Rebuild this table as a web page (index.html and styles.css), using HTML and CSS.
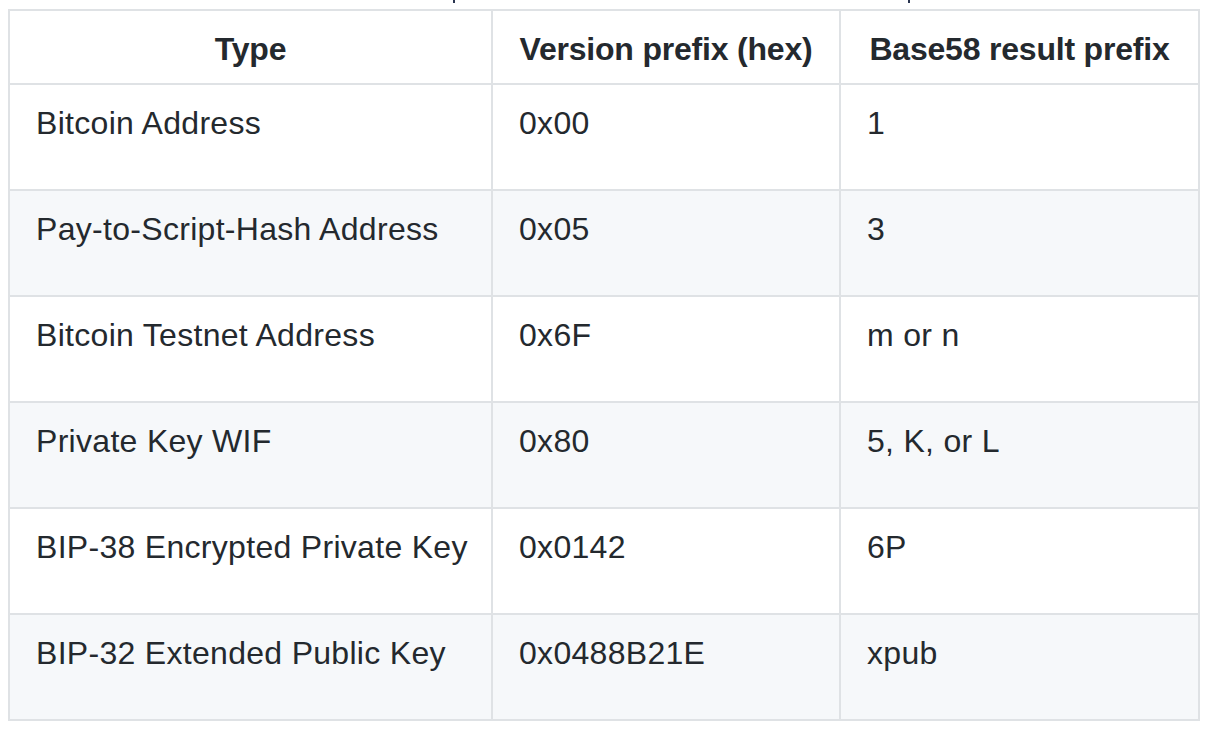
FILE: index.html
```html
<!DOCTYPE html>
<html lang="en">
<head>
<meta charset="utf-8">
<title>Base58Check version prefixes</title>
<link rel="stylesheet" href="styles.css">
</head>
<body>
<div class="page">
  <div class="caption-tail" aria-hidden="true">
    <span class="tail tail-a"></span>
    <span class="tail tail-b"></span>
  </div>
  <table class="prefix-table">
    <colgroup>
      <col class="col-type">
      <col class="col-version">
      <col class="col-result">
    </colgroup>
    <thead>
      <tr>
        <th>Type</th>
        <th>Version prefix (hex)</th>
        <th>Base58 result prefix</th>
      </tr>
    </thead>
    <tbody>
      <tr>
        <td><p>Bitcoin Address</p></td>
        <td><p>0x00</p></td>
        <td><p>1</p></td>
      </tr>
      <tr>
        <td><p>Pay-to-Script-Hash Address</p></td>
        <td><p>0x05</p></td>
        <td><p>3</p></td>
      </tr>
      <tr>
        <td><p>Bitcoin Testnet Address</p></td>
        <td><p>0x6F</p></td>
        <td><p>m or n</p></td>
      </tr>
      <tr>
        <td><p>Private Key WIF</p></td>
        <td><p>0x80</p></td>
        <td><p>5, K, or L</p></td>
      </tr>
      <tr>
        <td><p>BIP-38 Encrypted Private Key</p></td>
        <td><p>0x0142</p></td>
        <td><p>6P</p></td>
      </tr>
      <tr>
        <td><p>BIP-32 Extended Public Key</p></td>
        <td><p>0x0488B21E</p></td>
        <td><p>xpub</p></td>
      </tr>
    </tbody>
  </table>
</div>
</body>
</html>
```

FILE: styles.css
```css
html, body {
  margin: 0;
  padding: 0;
  background: #ffffff;
}

body {
  font-family: "Liberation Sans", Arial, Helvetica, sans-serif;
  color: #24292e;
}

.page {
  padding: 0 14px 0 8px;
}

.caption-tail {
  display: flex;
  height: 9px;
  align-items: flex-start;
}

.tail {
  display: block;
  width: 2px;
  height: 3px;
  background: #2a3550;
}

.tail-a {
  margin-left: 445px;
}

.tail-b {
  margin-left: 453px;
}

.prefix-table {
  border-collapse: collapse;
  table-layout: fixed;
  width: 1192px;
  font-size: 32px;
  line-height: 48px;
}

.col-type {
  width: 483px;
}

.col-version {
  width: 348px;
}

.col-result {
  width: 359px;
}

.prefix-table th,
.prefix-table td {
  border: 2px solid #dfe2e5;
  padding: 14px 26px 10px;
  vertical-align: top;
  white-space: nowrap;
}

.prefix-table th {
  font-weight: 700;
  text-align: center;
  letter-spacing: -0.2px;
}

.prefix-table td {
  text-align: left;
  letter-spacing: 0.3px;
}

.prefix-table td p {
  margin: 0 0 32px 0;
}

.prefix-table tbody tr:nth-child(even) {
  background: #f6f8fa;
}
```
